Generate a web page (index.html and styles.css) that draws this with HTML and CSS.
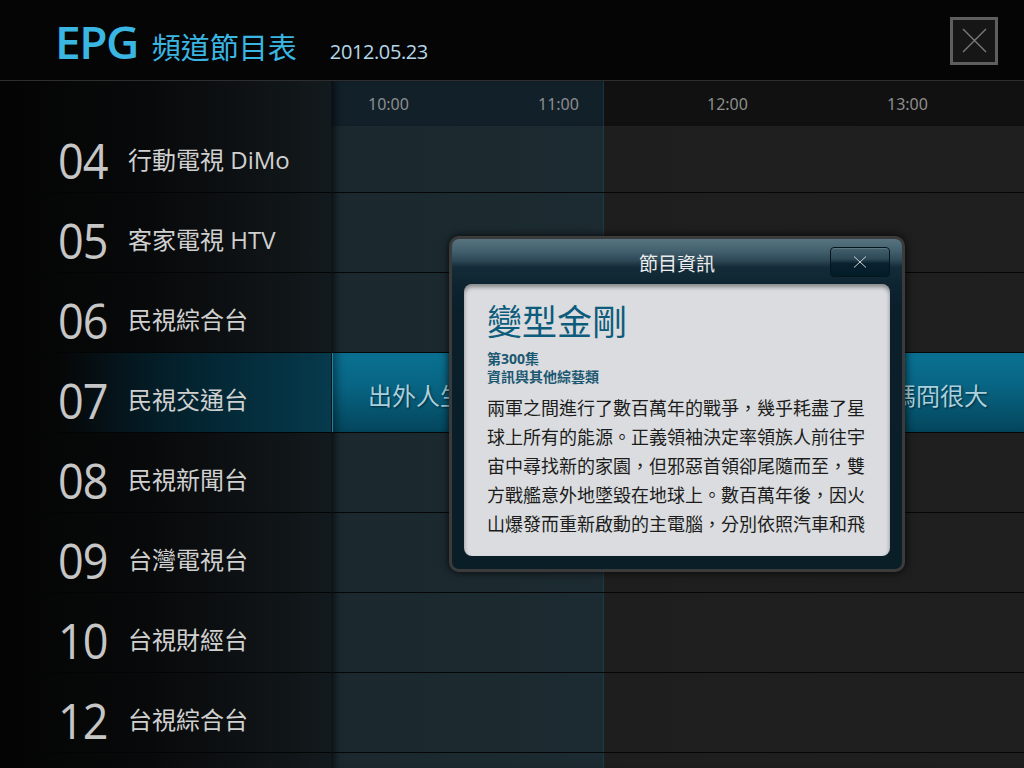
FILE: index.html
```
<!DOCTYPE html>
<html lang="zh-Hant">
<head>
<meta charset="utf-8">
<title>EPG 頻道節目表</title>
<link rel="stylesheet" href="styles.css">
</head>
<body>
<div class="screen">
  <header class="top">
    <div class="title">
      <span class="epg">EPG</span>
      <span class="zh">頻道節目表</span>
      <span class="date">2012.05.23</span>
    </div>
    <div class="close-box">
      <svg width="42" height="42" viewBox="0 0 42 42"><path d="M10 9 L33 32 M33 9 L10 32" stroke="#7a7a7a" stroke-width="1.4" fill="none"/></svg>
    </div>
  </header>
  <main class="body">
    <aside class="channels">
      <div class="ch"><span class="num">04</span><span class="name">行動電視 DiMo</span></div>
      <div class="ch"><span class="num">05</span><span class="name">客家電視 HTV</span></div>
      <div class="ch"><span class="num">06</span><span class="name">民視綜合台</span></div>
      <div class="ch active"><span class="num">07</span><span class="name">民視交通台</span></div>
      <div class="ch"><span class="num">08</span><span class="name">民視新聞台</span></div>
      <div class="ch"><span class="num">09</span><span class="name">台灣電視台</span></div>
      <div class="ch"><span class="num">10</span><span class="name">台視財經台</span></div>
      <div class="ch"><span class="num">12</span><span class="name">台視綜合台</span></div>
    </aside>
    <section class="guide">
      <div class="times"><span>10:00</span><span>11:00</span><span>12:00</span><span>13:00</span></div>
      <div class="row first"></div>
      <div class="row"></div>
      <div class="row"></div>
      <div class="row active">
        <div class="prog p1">出外人生</div>
        <div class="prog p2">天才老媽冏很大</div>
      </div>
      <div class="row"></div>
      <div class="row"></div>
      <div class="row"></div>
      <div class="row"></div>
      <div class="row"></div>
    </section>
  </main>
  <div class="dialog">
    <div class="dlg-head">
      <span class="dlg-title">節目資訊</span>
      <div class="dlg-close">
        <svg width="14" height="12" viewBox="0 0 14 12"><path d="M1 0.5 L13 11.5 M13 0.5 L1 11.5" stroke="#d0d0d0" stroke-width="1" fill="none"/></svg>
      </div>
    </div>
    <div class="panel">
      <h1 class="prog-title">變型金剛</h1>
      <div class="meta">第300集<br>資訊與其他綜藝類</div>
      <p class="desc">兩軍之間進行了數百萬年的戰爭，幾乎耗盡了星球上所有的能源。正義領袖決定率領族人前往宇宙中尋找新的家園，但邪惡首領卻尾隨而至，雙方戰艦意外地墜毀在地球上。數百萬年後，因火山爆發而重新啟動的主電腦，分別依照汽車和飛</p>
    </div>
  </div>
</div>
</body>
</html>
```
FILE: styles.css
```
* { box-sizing: border-box; }
html, body { margin: 0; padding: 0; background: #000; }
body { font-family: "Open Sans", "Noto Sans CJK TC", sans-serif; }

.screen {
  position: relative;
  width: 1024px;
  height: 768px;
  overflow: hidden;
  background: #000;
}

/* header */
.top {
  height: 81px;
  background: #050505;
  border-bottom: 1px solid #2e2e2e;
  display: flex;
  align-items: flex-start;
  padding-left: 55px;
}
.title {
  display: flex;
  align-items: baseline;
  padding-top: 18px;
  line-height: 1;
}
.epg {
  font-family: "Open Sans", sans-serif;
  font-weight: 600;
  font-size: 46px;
  letter-spacing: -1.5px;
  color: #3ab6e2;
}
.zh {
  font-family: "Noto Sans CJK TC", sans-serif;
  font-size: 29px;
  color: #3ab6e2;
  margin-left: 14px;
}
.date {
  font-family: "Open Sans", sans-serif;
  font-size: 20px;
  letter-spacing: -0.4px;
  color: #b4d8ea;
  margin-left: 33px;
}
.close-box {
  margin-left: auto;
  margin-right: 26px;
  margin-top: 17px;
  width: 48px;
  height: 48px;
  border: 3px solid #5e5e5e;
  background: #161616;
}
.close-box svg { display: block; }

/* body */
.body {
  display: flex;
  height: 687px;
}
.channels {
  width: 331px;
  flex: none;
  padding-top: 32px;
  background: linear-gradient(to right, #040404 0%, #08090a 45%, #0e1214 75%, #131a1d 100%);
}
.ch {
  height: 80px;
  border-bottom: 1px solid #030404;
  padding: 15px 0 0 58px;
  display: flex;
  align-items: center;
  color: #cdcdcd;
}
.ch.active {
  background: linear-gradient(to right, rgba(0,0,0,0) 18%, #03222e 55%, #063a4d 100%);
}
.num {
  width: 70px;
  flex: none;
  font-family: "Open Sans", sans-serif;
  font-size: 50px;
  letter-spacing: -1px;
  line-height: 1;
  color: #c6c6c6;
  transform: scaleX(0.9);
  transform-origin: left center;
}
.name {
  font-family: "Open Sans", "Noto Sans CJK TC", sans-serif;
  font-size: 24px;
  line-height: 1;
  color: #d0d0d0;
}

/* guide */
.guide {
  flex: 1;
  border-left: 1px solid #0d1316;
  background: linear-gradient(to right, #1b292e 0, #1c2b31 271px, #1d3b47 271px, #1d3b47 272px, #1e1e1e 272px, #1f1f1f 100%);
  box-shadow: inset 8px 0 8px -6px rgba(0,0,0,0.7);
}
.times {
  height: 45px;
  display: grid;
  grid-template-columns: 170px 169px 180px 1fr;
  align-items: center;
  padding-left: 36px;
  background: linear-gradient(to right, #12202a 0, #12202a 271px, #173440 271px, #173440 272px, #111111 272px);
  box-shadow: inset 8px 0 8px -6px rgba(0,0,0,0.7);
  font-family: "Noto Sans", sans-serif;
  font-size: 16px;
  color: #8d8d8d;
}
.row {
  height: 80px;
  border-bottom: 1px solid #060606;
}
.row.first { height: 67px; }
.row.active {
  display: flex;
  background: linear-gradient(to bottom, #0a7192 0%, #086584 40%, #055069 80%, #04465d 100%);
  box-shadow: inset 1px 0 0 #2a7f9a, inset 10px 0 10px -6px rgba(0,0,0,0.45);
}
.prog {
  display: flex;
  align-items: center;
  padding: 4px 0 0 36px;
  font-family: "Noto Sans CJK TC", sans-serif;
  font-size: 24px;
  color: #a9d0de;
  text-shadow: 1px 1px 2px rgba(0,20,30,0.7);
  white-space: nowrap;
}
.p1 { width: 452px; flex: none; }
.p2 { flex: 1; }

/* dialog */
.dialog {
  position: absolute;
  left: 449px;
  top: 236px;
  width: 456px;
  height: 336px;
  border: 3px solid #3b3b3b;
  border-radius: 10px;
  background: linear-gradient(to bottom, #56737f 0, #43606e 12px, #2c4654 22px, #142c39 28px, #0e2431 45px, #0a1f2a 70px, #0a1e28 100%);
  box-shadow: 0 0 8px rgba(0,0,0,0.85);
  display: flex;
  flex-direction: column;
  padding: 0 12px 13px;
}
.dlg-head {
  height: 45px;
  flex: none;
  display: grid;
  grid-template-columns: 1fr auto 1fr;
  align-items: center;
}
.dlg-title {
  grid-column: 2;
  font-family: "Noto Sans CJK TC", sans-serif;
  font-size: 19px;
  color: #ececec;
  padding-top: 2px;
}
.dlg-close {
  grid-column: 3;
  justify-self: end;
  width: 60px;
  height: 30px;
  margin-top: 1px;
  border: 1px solid #05151d;
  border-radius: 4px;
  background: linear-gradient(to bottom, #45616e 0, #2c4755 40%, #0a2230 55%, #031c28 100%);
  box-shadow: inset 0 1px 0 rgba(255,255,255,0.15);
  display: flex;
  align-items: center;
  justify-content: center;
}
.dlg-close svg { display: block; }
.panel {
  flex: 1;
  background: #dbdcdf;
  border-radius: 8px;
  box-shadow: inset 0 3px 4px rgba(0,0,0,0.4);
  padding: 16px 20px 0 23px;
  overflow: hidden;
}
.prog-title {
  margin: 0;
  font-family: "Noto Sans CJK TC", sans-serif;
  font-weight: 400;
  font-size: 35px;
  line-height: 40px;
  color: #0d5c7c;
}
.meta {
  margin-top: 10px;
  font-family: "Open Sans", "Noto Sans CJK TC", sans-serif;
  font-weight: 700;
  font-size: 14px;
  line-height: 18px;
  color: #1b5872;
}
.desc {
  margin: 7px 0 0;
  width: 384px;
  font-family: "Noto Sans CJK TC", sans-serif;
  font-size: 18px;
  line-height: 29px;
  color: #1c1c1c;
}
```
